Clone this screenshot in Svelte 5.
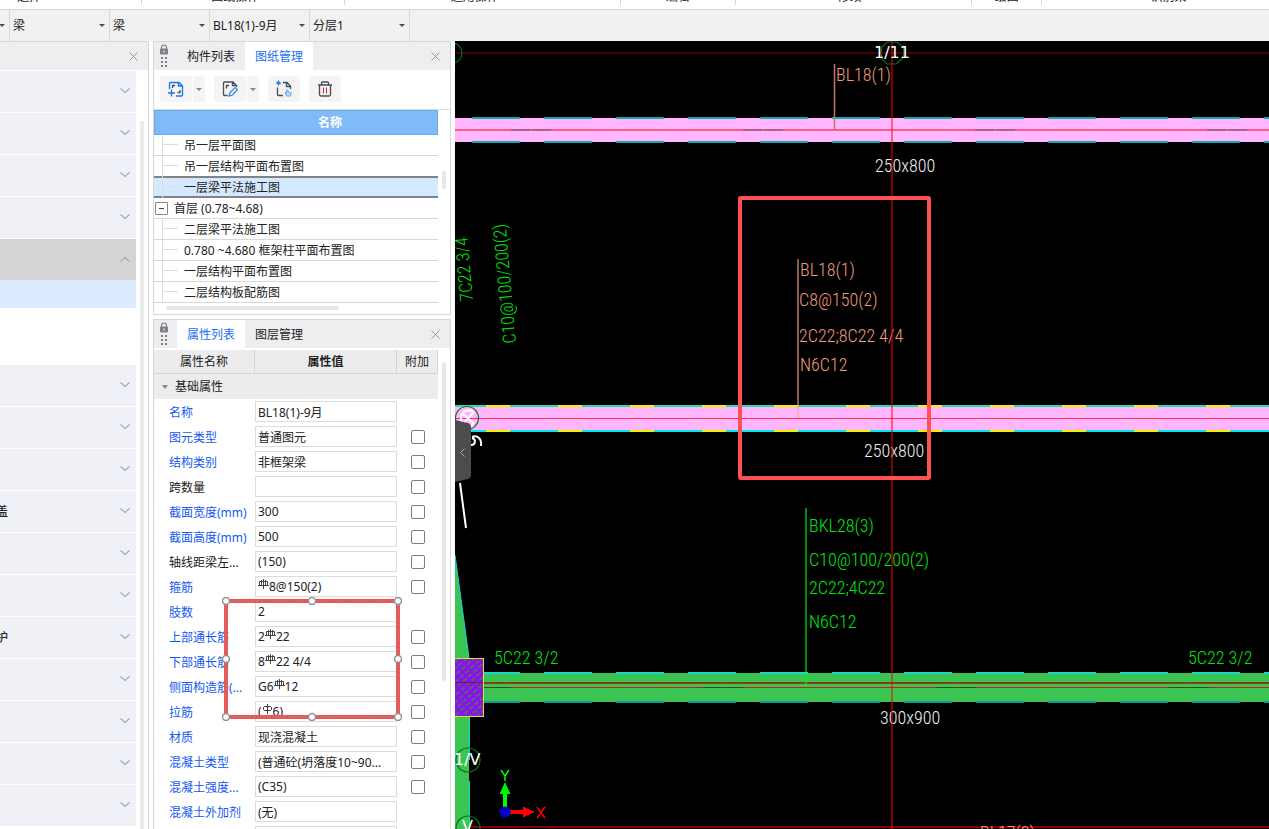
<script>
  const groups = [
    { text: '选择', width: 142, before: 17, start: true },
    { text: '图纸操作', width: 203, after: 16 },
    { text: '通用操作', width: 276, after: 16 },
    { text: '编辑', width: 114 },
    { text: '修改', width: 237, after: 8 },
    { text: '绘图', width: 69 },
    { text: '识别梁', width: 228, before: 26 }
  ];
  const selectors = [
    { label: '构件类别', value: '梁' },
    { label: '构件类型', value: '梁' },
    { label: '构件', value: 'BL18(1)-9月' },
    { label: '分层', value: '分层1' }
  ];
  const modulesTop = ['', '', '', ''];
  const modulesBottom = ['', '', '', '盖', '', '', '护', '', '', '', ''];
  const drawings = [
    { text: '吊一层平面图' },
    { text: '吊一层结构平面布置图' },
    { text: '一层梁平法施工图', selected: true },
    { text: '首层 (0.78~4.68)', parent: true },
    { text: '二层梁平法施工图' },
    { text: '0.780 ~4.680 框架柱平面布置图' },
    { text: '一层结构平面布置图' },
    { text: '二层结构板配筋图' }
  ];
  const props = [
    { name: '名称', value: 'BL18(1)-9月', blue: true },
    { name: '图元类型', value: '普通图元', blue: true, check: true },
    { name: '结构类别', value: '非框架梁', blue: true, check: true },
    { name: '跨数量', value: '', check: true },
    { name: '截面宽度(mm)', value: '300', blue: true, check: true },
    { name: '截面高度(mm)', value: '500', blue: true, check: true },
    { name: '轴线距梁左...', value: '(150)', check: true },
    { name: '箍筋', pre: '', value: '8@150(2)', bar: 'C', blue: true, check: true },
    { name: '肢数', value: '2', blue: true },
    { name: '上部通长筋', pre: '2', value: '22', bar: 'C', blue: true, check: true },
    { name: '下部通长筋', pre: '8', value: '22 4/4', bar: 'C', blue: true, check: true },
    { name: '侧面构造筋(...', pre: 'G6', value: '12', bar: 'C', blue: true, check: true },
    { name: '拉筋', pre: '(', value: '6)', bar: 'A', blue: true, check: true },
    { name: '材质', value: '现浇混凝土', blue: true, check: true },
    { name: '混凝土类型', value: '(普通砼(坍落度10~90...', blue: true, check: true },
    { name: '混凝土强度...', value: '(C35)', blue: true, check: true },
    { name: '混凝土外加剂', value: '(无)', blue: true },
    { name: '', value: '' }
  ];
  const notes = [
    { x: 836, y: 81, t: 'BL18(1)', c: 'salmon' },
    { x: 875, y: 172, t: '250x800', c: 'white' },
    { x: 800, y: 276, t: 'BL18(1)', c: 'salmon' },
    { x: 799, y: 306, t: 'C8@150(2)', c: 'salmon' },
    { x: 799, y: 342, t: '2C22;8C22 4/4', c: 'salmon' },
    { x: 800, y: 371, t: 'N6C12', c: 'salmon' },
    { x: 864, y: 457, t: '250x800', c: 'white' },
    { x: 809, y: 532, t: 'BKL28(3)', c: 'green' },
    { x: 809, y: 566, t: 'C10@100/200(2)', c: 'green' },
    { x: 809, y: 594, t: '2C22;4C22', c: 'green' },
    { x: 809, y: 628, t: 'N6C12', c: 'green' },
    { x: 494, y: 664, t: '5C22 3/2', c: 'green' },
    { x: 1188, y: 664, t: '5C22 3/2', c: 'green' },
    { x: 880, y: 724, t: '300x900', c: 'white' },
    { x: 980, y: 839, t: 'BL17(2)', c: 'salmon' }
  ];
  const handles = [[4, 4], [90, 4], [176, 4], [4, 62], [176, 62], [4, 120], [90, 120], [176, 120]];
</script>

{#snippet chevron(up)}
  <svg class="chev" width="10" height="6" viewBox="0 0 10 6"><path d={up ? 'M0.5 5.5 5 1.5 9.5 5.5' : 'M0.5 0.5 5 4.5 9.5 0.5'} /></svg>
{/snippet}

{#snippet cross()}
  <button class="close" aria-label="关闭"><svg width="9" height="9" viewBox="0 0 9 9"><path d="M0.5 0.5 8.5 8.5M8.5 0.5 0.5 8.5" /></svg></button>
{/snippet}

{#snippet grip()}
  <svg class="grip" width="10" height="24" viewBox="0 0 10 24">
    <path d="M2.5 5V3.5a2.5 2.5 0 0 1 5 0V5" fill="none" stroke="#808084" stroke-width="1.2" />
    <rect x="1" y="4.500" width="8" height="6" rx="1" fill="#808084" /><circle cx="5" cy="7.500" r="1" fill="#d8d8da" />
    <path d="M2 13h2v2H2zM6 13h2v2H6zM2 17h2v2H2zM6 17h2v2H6zM2 21h2v2H2zM6 21h2v2H6z" fill="#808084" />
  </svg>
{/snippet}

<div class="app">
  <header class="ribbon">
    {#each groups as g}
      <div class="group" class:start={g.start} style="flex-grow: {g.width}"><span style="padding-left: {g.before ?? 0}px; padding-right: {g.after ?? 0}px">{g.text}</span></div>
    {/each}
  </header>

  <div class="selectbar">
    <span class="stub"></span>
    {#each selectors as s}
      <label class="pick"><select aria-label={s.label}><option>{s.value}</option></select></label>
    {/each}
  </div>

  <main>
    <nav class="modules">
      <div class="head">{@render cross()}</div>
      <div class="body">
        <div class="list">
          {#each modulesTop as m}
            <button class="mod" aria-label="模块">{m}{@render chevron(false)}</button>
          {/each}
          <button class="mod open" aria-label="梁">{@render chevron(true)}</button>
          <div class="sub"><div class="current"></div></div>
          {#each modulesBottom as m}
            <button class="mod" aria-label="模块">{m}{@render chevron(false)}</button>
          {/each}
        </div>
        <div class="rail"></div>
      </div>
    </nav>

    <div class="docks">
      <section class="dock">
        <div class="head">
          {@render grip()}
          <button class="tab">构件列表</button>
          <button class="tab active">图纸管理</button>
          {@render cross()}
        </div>
        <div class="tools">
          <div class="split">
            <button class="tool" aria-label="添加图纸">
              <svg width="18" height="18" viewBox="0 0 18 18" fill="none">
                <path d="M2.500 9V3.500a1 1 0 0 1 1-1H12L15.500 6v9a1 1 0 0 1-1 1H9M11.500 2.500V6h4" stroke="#1a74f0" stroke-width="1.300" />
                <path d="M5.500 8V5.500H8M13 10v2.500h-2.500" stroke="#454c5c" stroke-width="1.300" />
                <path d="M1 13h7M4.500 9.500v7" stroke="#1a74f0" stroke-width="1.300" />
              </svg>
            </button>
            <button class="drop" aria-label="更多"></button>
          </div>
          <div class="split">
            <button class="tool" aria-label="编辑图纸">
              <svg width="18" height="18" viewBox="0 0 18 18" fill="none">
                <path d="M6.500 15.500h-3a1 1 0 0 1-1-1V3a1 1 0 0 1 1-1H12l3.500 3.500V7M11.500 2v3.500h4M5.500 8.500V5.500H8" stroke="#454c5c" stroke-width="1.300" />
                <path d="M8 16 9 12.500 14 7.500 16.500 9.500 11.500 15Z" stroke="#3486ee" stroke-width="1.300" />
              </svg>
            </button>
            <button class="drop" aria-label="更多"></button>
          </div>
          <button class="tool" aria-label="定位图纸">
            <svg width="18" height="18" viewBox="0 0 18 18" fill="none">
              <path d="M2.500 7.500v7a1 1 0 0 0 1 1H8M8 2.500h4l3.500 3.500v3M11.500 2.500v4H15.500" stroke="#454c5c" stroke-width="1.300" />
              <path d="M3.500 0.500 4.300 2.200 6 3 4.300 3.800 3.500 5.500 2.700 3.800 1 3 2.700 2.200Z" fill="#1a74f0" stroke="#1a74f0" stroke-width="0.600" />
              <path d="M11.500 10v3l-1.500-.5 1.500 3.500h4l1-3-3.500-.8V10z" fill="#c4dcfa" stroke="#6ea8f0" />
            </svg>
          </button>
          <button class="tool" aria-label="删除图纸">
            <svg width="18" height="18" viewBox="0 0 18 18" fill="none">
              <path d="M2 5h14M5.500 4.500V3a1 1 0 0 1 1-1h5a1 1 0 0 1 1 1v1.500M3.500 5v9.500a1.500 1.500 0 0 0 1.500 1.500h8a1.500 1.500 0 0 0 1.500-1.500V5" stroke="#454c5c" stroke-width="1.300" />
              <path d="M7.500 7.500v6M10.500 7.500v6" stroke="#e02020" />
            </svg>
          </button>
        </div>
        <div class="treebox">
          <table class="tree">
            <thead><tr><th>名称</th></tr></thead>
            <tbody>
              {#each drawings as d}
                <tr class:selected={d.selected} class:parent={d.parent}>
                  <td><div class="cell">
                    {#if d.parent}<span class="minus"></span>{:else}<span class="branch"></span>{/if}
                    <span class="name">{d.text}</span>
                  </div></td>
                </tr>
              {/each}
            </tbody>
          </table>
          <div class="vthumb"></div>
        </div>
        <div class="hthumb"></div>
      </section>

      <section class="dock grow">
        <div class="head">
          {@render grip()}
          <button class="tab active">属性列表</button>
          <button class="tab">图层管理</button>
          {@render cross()}
        </div>
        <div class="propbox">
          <table class="props">
            <colgroup><col class="c1" /><col /><col class="c3" /></colgroup>
            <thead><tr><th>属性名称</th><th class="b">属性值</th><th>附加</th></tr></thead>
            <tbody>
              <tr class="cat"><td colspan="3"><span class="tri"></span>基础属性</td></tr>
              {#each props as p, i}
                <tr>
                  <td class:blue={p.blue}><label for="p{i}">{p.name}</label></td>
                  <td>
                    <div class="field">
                      {#if p.bar}
                        {#if p.pre}<span>{p.pre}</span>{/if}
                        <svg class="bar" width="11" height="11" viewBox="0 0 11 11" fill="none" stroke="#333">
                          {#if p.bar === 'C'}
                            <path d="M5.500 0v10M3.500 2.500H1.500v4M7.500 2.500h2v4M3.500 1v5.500M7.500 1v5.500M3.500 2.500h4M0 6.500h11" stroke-width="0.900" />
                          {:else}
                            <path d="M5.500 0v10M2.500 2.500h6l1 1v2l-1 1h-6l-1-1v-2z" />
                          {/if}
                        </svg>
                      {/if}
                      <input id="p{i}" type="text" value={p.value} />
                    </div>
                  </td>
                  <td class="ck">{#if p.check}<input type="checkbox" aria-label="附加 {p.name}" />{/if}</td>
                </tr>
              {/each}
            </tbody>
          </table>
          <div class="propthumb"></div>
        </div>
        <svg class="mark" width="180" height="124" viewBox="0 0 180 124" fill="none">
          <rect x="4" y="4" width="172" height="116" stroke="#f85050" stroke-width="4" />
          <rect x="4" y="4" width="172" height="116" stroke="#a08080" stroke-width="1.500" stroke-dasharray="3 2" />
          {#each handles as h}<circle cx={h[0]} cy={h[1]} r="3.500" fill="#fff" stroke="#909090" stroke-width="1.500" />{/each}
        </svg>
      </section>
    </div>

    <div class="canvas">
      <svg width="100%" height="100%">
        <defs>
          <pattern id="hatch" width="7" height="5" patternUnits="userSpaceOnUse" patternTransform="rotate(-42)">
            <rect width="7" height="5" fill="#8c0aff" /><path d="M0 1.500h7" stroke="#4c7a3a" stroke-width="1.800" stroke-dasharray="5 2" />
          </pattern>
        </defs>
        <g transform="translate(-455 -41)" fill="none">
          <path d="M455 53H4000" stroke="#480000" stroke-width="2" />
          <path d="M455 827H4000" stroke="#800000" stroke-width="2" />

          <path d="M455 118H4000V142H455Z" fill="#ffb6ff" />
          <path d="M472 118H4000M472 142H4000" stroke="#16a8b0" stroke-width="2" stroke-dasharray="48 24" />
          <path d="M455 130H4000" stroke="#ff5a80" stroke-width="2" />
          <path d="M511 130H4000" stroke="#b85c88" stroke-width="2" stroke-dasharray="19 2 19 192" />

          <path d="M455 406H4000V431H455Z" fill="#ffb6ff" />
          <path d="M455 406H4000" stroke="#28dcb0" stroke-width="2" />
          <path d="M455 431H4000" stroke="#00e4f0" stroke-width="2" />
          <path d="M486 406H4000M486 431H4000" stroke="#f4f000" stroke-width="2" stroke-dasharray="24 48" />
          <path d="M455 418.500H4000" stroke="#f83050" />

          <path d="M455 555 469 658V829H455Z" fill="#3cc452" />
          <path d="M455 555 469 658M469.500 717V760M469.500 781V829" stroke="#10d8d8" />
          <path d="M484 673H4000V702H484Z" fill="#3cc452" />
          <path d="M472 673H4000" stroke="#18d8d0" stroke-width="2" stroke-dasharray="48 24" />
          <path d="M472 702H4000" stroke="#0c9c94" stroke-width="2" stroke-dasharray="48 24" />
          <path d="M455 683H4000" stroke="#7a4018" stroke-width="2" />
          <path d="M455 687.500H4000" stroke="#d01818" />
          <path d="M470 687.500H4000" stroke="#3a4a10" stroke-dasharray="19 2 19 193" />
          <rect x="440" y="658.500" width="43.500" height="58" fill="url(#hatch)" stroke="#e8e020" />
          <path d="M455 682.500h28" stroke="#801040" />

          <path d="M834.500 64V130" stroke="#c07860" stroke-width="1.500" />
          <path d="M798 259V418" stroke="#ffa080" stroke-opacity="0.550" stroke-width="2" />
          <path d="M806 508V687" stroke="#00ff10" stroke-opacity="0.550" stroke-width="2" />

          {#each notes as n}<text x={n.x} y={n.y} class={n.c}>{n.t}</text>{/each}
          <text class="green" transform="translate(473 301) rotate(-95)">7C22 3/4</text>
          <text class="green" transform="translate(516 343) rotate(-95)">C10@100/200(2)</text>

          <path d="M892 41V2000" stroke="#ff0000" stroke-opacity="0.500" stroke-width="2" />
          <g stroke="#0a7018" stroke-width="1.200">
            <path d="M887 42h10l6 5 1 6-2 6-6 5h-9l-5-5-1-6 1-6z" />
            <circle cx="452" cy="53" r="10" />
            <circle cx="467" cy="418" r="11.500" /><circle cx="468" cy="760" r="12" /><circle cx="468" cy="828" r="12" />
          </g>
          <text x="874" y="58" class="axis">1/11</text>
          <text x="454" y="765" class="axis">1/V</text>
          <text x="462" y="832" class="axis">V</text>
          <path d="M473 411c-5-2-12 0-12 7s7 9 12 7M462 413l12 11M474 412l-11 12" stroke="#fff" stroke-width="2" />
          <path d="M472 437c5-2 10 1 9 9M471 445c5 0 5-6 1-7M460 483l6 45" stroke="#fff" stroke-width="2" />
          <path d="M455 420 468 423q3 1 3 4V474q0 4-3 5L455 482Z" fill="#4c4c4c" />
          <path d="M464.500 448.500 460.500 452.500 464.500 456.500" stroke="#aaa" />

          <path d="M505 812V792" stroke="#00ff00" stroke-width="4" /><path d="M499.500 794 505 782 510.500 794Z" fill="#00f000" />
          <path d="M505 812H525" stroke="#ff0000" stroke-width="4" /><path d="M523 806.500 535 812 523 817.500Z" fill="#ff0000" />
          <circle cx="505" cy="812" r="5.500" fill="#0000c8" />
          <path d="M501 770 505 776 509 770M505 776V781" stroke="#00ff00" stroke-width="1.500" />
          <path d="M537 807 545 818M545 807 537 818" stroke="#ff0000" stroke-width="1.500" />

          <rect x="740" y="198" width="189" height="280" rx="1" stroke="#ff5252" stroke-width="4" />
        </g>
      </svg>
    </div>
  </main>
</div>

<style>
  :global(body) { margin: 0; background: #fff; }
  .app { height: 100vh; display: flex; flex-direction: column; overflow: hidden; background: #fff; color: #222; font: 12px/16px "Noto Sans", "Noto Sans CJK SC", sans-serif; }
  button, input, select { font: inherit; color: inherit; border: 0; padding: 0; margin: 0; background: none; border-radius: 0; }
  .ribbon { display: flex; height: 9px; overflow: hidden; border-bottom: 1px solid #d8d8d8; flex: none; }
  .group { flex: 1 1 0; min-width: 0; height: 5px; display: flex; align-items: flex-end; justify-content: center; border-right: 1px solid #d8d8d8; box-sizing: border-box; }
  .group.start { justify-content: flex-start; }
  .group:last-child { border: 0; }
  .group span { line-height: 16px; white-space: nowrap; }

  .selectbar { display: flex; height: 31px; background: #f1f1f1; flex: none; }
  .stub, .pick { position: relative; box-sizing: border-box; border-right: 1px solid #d8d8d8; }
  .stub { width: 10px; }
  .pick { width: 100px; }
  .stub::after, .pick::after { content: ""; position: absolute; right: 4px; top: 14px; border: 3px solid transparent; border-top: 3px solid #454c5c; border-bottom: 0; pointer-events: none; }
  .pick select { appearance: none; width: 100%; height: 31px; padding-left: 3px; outline: 0; }

  main { flex: 1; display: flex; gap: 4px; min-height: 0; }
  .head { display: flex; align-items: center; height: 29px; background: #eeeef0; border-top: 1px solid #d8d8d8; box-sizing: border-box; flex: none; }
  .close { margin-left: auto; margin-right: 10px; display: flex; }
  .close path { stroke: #999; fill: none; }

  .modules { width: 149px; box-sizing: border-box; border-right: 1px solid #d4d4d4; display: flex; flex-direction: column; flex: none; }
  .body { flex: 1; display: flex; gap: 4px; min-height: 0; overflow: hidden; padding-top: 1px; }
  .list { width: 136px; display: flex; flex-direction: column; gap: 1px; }
  .mod { height: 41px; flex: none; display: flex; align-items: center; background: #f0f1f6; padding-right: 6px; margin-left: -4px; font-weight: 500; }
  .mod.open { background: #d4d4d4; margin-bottom: -1px; }
  .chev { margin-left: auto; margin-bottom: 2px; fill: none; stroke: #a2aac4; stroke-width: 1.3; }
  .sub { height: 84px; flex: none; }
  .current { height: 28px; background: #dcebff; }
  .rail { width: 4px; background: #ebebeb; margin-top: 50px; }

  .docks { width: 298px; display: flex; flex-direction: column; gap: 4px; flex: none; }
  .dock { position: relative; border: 1px solid #d8d8d8; border-top: 0; display: flex; flex-direction: column; box-sizing: border-box; }
  .dock.grow { flex: 1; min-height: 0; border-bottom: 0; }
  .dock .head { padding-left: 5px; }
  .grip { margin-right: 8px; }
  .tab { width: 68px; height: 28px; padding-top: 2px; }
  .tab.active { background: #fff; color: #1a6ff0; }
  .tools { display: flex; gap: 9px; height: 40px; box-sizing: border-box; padding: 6px 6px 7px; border-bottom: 1px solid #dcdcdc; }
  .split { display: flex; gap: 1px; }
  .tool { width: 32px; height: 26px; background: #f4f4f4; border-radius: 3px; display: flex; align-items: center; justify-content: center; }
  .drop { width: 12px; height: 26px; background: #f4f4f4; border-radius: 0 3px 3px 0; }
  .drop::after { content: ""; display: block; width: 0; margin: auto; border: 3px solid transparent; border-top-color: #888; border-bottom: 0; }
  table { border-collapse: separate; border-spacing: 0; table-layout: fixed; }
  th, td { padding: 0; font-weight: 400; }
  .treebox { display: flex; gap: 4px; align-items: flex-start; }
  .tree { flex: 1; }
  .tree th { height: 25px; box-sizing: border-box; background: #80baf9; border: 1px solid #6aa8ec; color: #fff; font-weight: 700; padding-left: 68px; }
  .cell { display: flex; align-items: center; gap: 6px; height: 21px; box-sizing: border-box; border-bottom: 1px solid #d8d8d8; white-space: nowrap; padding-left: 8px; }
  .name { padding-top: 2px; }
  .branch { width: 16px; height: 21px; box-sizing: border-box; border-left: 1px solid #ddd; background: linear-gradient(#ddd, #ddd) 0 9px / 100% 1px no-repeat; }
  .selected .cell { background: #d4e9ff; border-top: 1px solid #828282; border-bottom: 2px solid #828282; box-shadow: 0 -1px #828282; }
  .parent .cell { padding-left: 1px; }
  .minus { width: 13px; height: 13px; box-sizing: border-box; border: 1px solid #888; border-radius: 1px; background: linear-gradient(#444, #444) center / 5px 1px no-repeat; }
  .vthumb { width: 4px; height: 18px; margin: 61px 4px 0 0; background: #e8e8e8; border-radius: 2px; }
  .hthumb { width: 173px; height: 4px; margin: 3px 0 4px 12px; background: #e8e8e8; border-radius: 2px; }

  .propbox { display: flex; align-items: flex-start; gap: 4px; flex: 1; min-height: 0; overflow: hidden; padding-top: 2px; }
  .props { width: 284px; }
  .c1 { width: 101px; }
  .c3 { width: 41px; }
  .props th { height: 24px; background: #ececec; border-right: 1px solid #d4d4d4; border-bottom: 1px solid #d4d4d4; box-sizing: border-box; }
  .props th.b { font-weight: 600; }
  .cat td { height: 25px; background: #ececec; padding-left: 8px; }
  .tri { display: inline-block; border: 3px solid transparent; border-top: 4px solid #888; border-bottom: 0; vertical-align: 2px; margin-right: 7px; }
  .props tbody tr:not(.cat) td { height: 25px; }
  .props label { display: block; padding: 2px 0 0 15px; white-space: nowrap; }
  .blue { color: #1458f0; }
  .field { display: flex; align-items: center; height: 21px; box-sizing: border-box; border: 1px solid #dcdcdc; padding-left: 2px; }
  .field input { flex: 1; min-width: 0; outline: 0; height: 19px; }
  .bar { flex: none; align-self: flex-start; margin-top: 2px; }
  .ck { text-align: center; }
  .ck input { appearance: none; display: block; margin: 0 auto; width: 14px; height: 14px; box-sizing: border-box; border: 1px solid #7c7c7c; border-radius: 2px; background: #fff; }
  .propthumb { width: 4px; height: 319px; margin-top: 12px; background: #e8e8e8; border-radius: 2px; }
  .mark { position: absolute; left: 68px; top: 278px; pointer-events: none; }

  .canvas { flex: 1; min-width: 0; background: #000; overflow: hidden; }
  .canvas svg { display: block; }
  text { font-family: "Roboto Condensed", "Liberation Sans Narrow", Roboto, sans-serif; font-size: 18px; font-weight: 300; white-space: pre; }
  .salmon { fill: #f09a7c; }
  .white { fill: #f0f0f0; }
  .green { fill: #00e410; }
  .axis { font-family: "DejaVu Sans", sans-serif; font-size: 16px; font-weight: 400; fill: #fff; }
</style>
